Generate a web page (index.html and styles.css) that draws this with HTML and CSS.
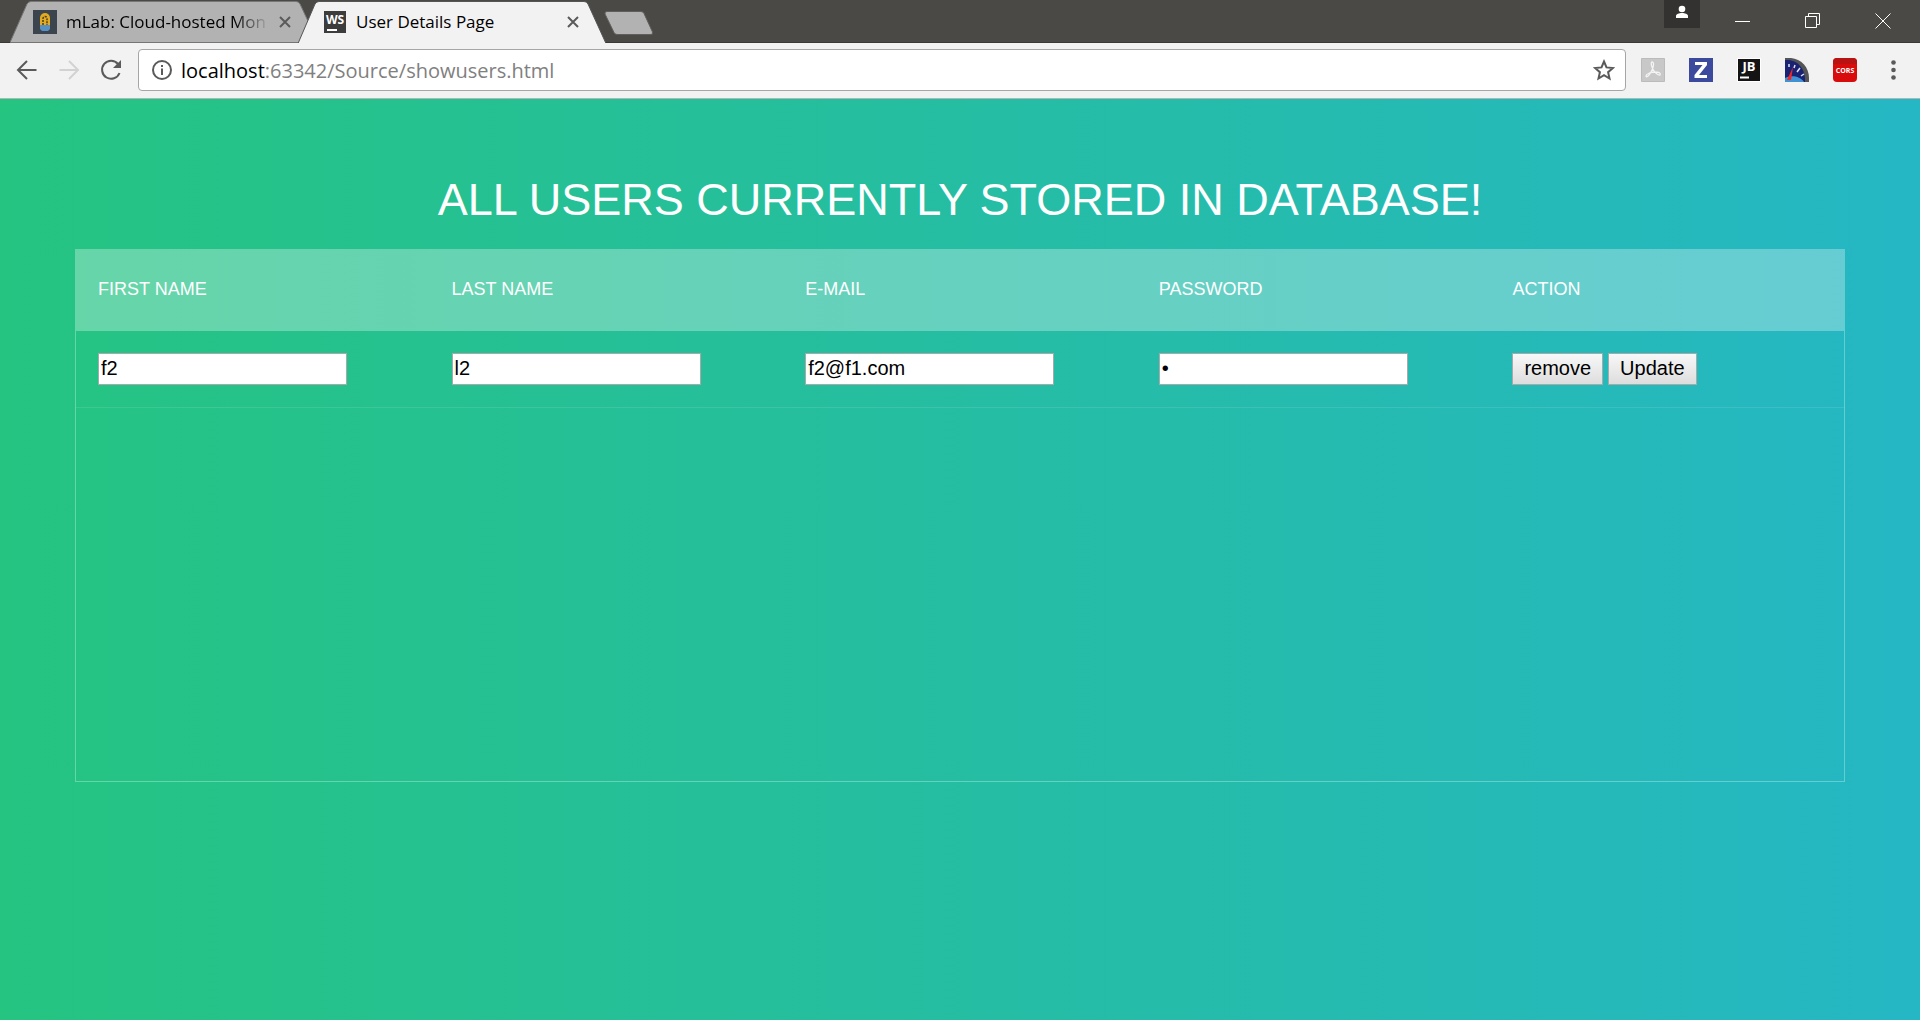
FILE: index.html
```html
<!DOCTYPE html>
<html lang="en">
<head>
<meta charset="utf-8">
<title>User Details Page</title>
<link rel="stylesheet" href="styles.css">
</head>
<body>
<header class="browser">
  <div class="tabstrip">
    <div class="tab">
      <svg class="tab-shape" viewBox="0 0 309 43" aria-hidden="true"><path d="M0 42.500L17 4Q18.500 1.500 21 1.500H286Q289 1.500 290 4L308 42.500" fill="#b2b2b2" stroke="#777" /></svg>
      <svg class="favicon" viewBox="0 0 24 24" aria-hidden="true"><rect width="24" height="24" fill="#3c444d"/><path d="M7 16V8a5 5 0 0 1 10 0v8z" fill="#e3ac20"/><path d="M10 15V8.500a2 2 0 0 1 4 0V15" fill="none" stroke="#4a3d20" stroke-width="1.500" stroke-dasharray="2 1"/><path d="M7 15h10v4l-2 2H9l-2-2z" fill="#5790c4"/></svg>
      <span class="tab-title fading">mLab: Cloud-hosted Mon</span>
      <button class="tab-close" aria-label="Close tab"><svg width="12" height="12" viewBox="0 0 12 12"><path d="M1 1l10 10M11 1L1 11"/></svg></button>
    </div>
    <div class="tab active">
      <svg class="tab-shape" viewBox="0 0 309 43" aria-hidden="true"><path d="M0 43.500L17 4Q18.500 1.500 21 1.500H286Q289 1.500 290 4L308 43.500" fill="#f2f2f2" stroke="#555"/></svg>
      <svg class="favicon" viewBox="0 0 24 24" aria-hidden="true"><rect x="1" y="1" width="22" height="22" fill="#3c3c3c"/><text x="12" y="14" class="logo-text" font-size="12" text-anchor="middle">WS</text><path d="M4 19h10v2H4z" fill="#fff"/></svg>
      <span class="tab-title">User Details Page</span>
      <button class="tab-close" aria-label="Close tab"><svg width="12" height="12" viewBox="0 0 12 12"><path d="M1 1l10 10M11 1L1 11"/></svg></button>
    </div>
    <button class="new-tab" aria-label="New tab"><svg width="50" height="24" viewBox="0 0 50 24"><path d="M3 .5H37Q39 .5 40 2.500L48.500 21Q49 23.500 47 23.500H13Q11 23.500 10 21.500L1 3Q.5 .5 3 .5z" fill="#b2b2b2" stroke="#5f5e5b"/></svg></button>
    <div class="window-controls">
      <button class="profile" aria-label="Profile"><svg width="14" height="14" viewBox="0 0 14 14"><circle cx="7" cy="4" r="3.300" fill="#fff"/><path d="M1 13v-2c0-2 3-3 6-3s6 1 6 3v2z" fill="#fff"/></svg></button>
      <button class="window-button" aria-label="Minimize"><svg width="16" height="16" viewBox="0 0 16 16"><path d="M0 8.500h15"/></svg></button>
      <button class="window-button" aria-label="Restore"><svg width="16" height="16" viewBox="0 0 16 16"><path d="M.5 3.500h11v11H.5zM3.500 3.500V.5h11v11h-3"/></svg></button>
      <button class="window-button" aria-label="Close"><svg width="16" height="16" viewBox="0 0 16 16"><path d="M.5 .5l15 15M15.500 .5l-15 15"/></svg></button>
    </div>
  </div>
  <div class="toolbar">
    <button class="nav-button" aria-label="Back"><svg width="22" height="22" viewBox="0 0 22 22"><path d="M20.500 11H2M11 2l-9 9 9 9"/></svg></button>
    <button class="nav-button" aria-label="Forward" disabled><svg width="22" height="22" viewBox="0 0 22 22"><path d="M1.500 11H20M11 2l9 9-9 9"/></svg></button>
    <button class="nav-button" aria-label="Reload"><svg width="22" height="22" viewBox="0 0 22 22"><path d="M18 5a9 9 0 1 0 1.500 9"/><path d="M21 1v8h-8z" fill="#5a5a5a" stroke="none"/></svg></button>
    <div class="omnibox">
      <svg width="22" height="22" viewBox="0 0 22 22" aria-hidden="true"><circle cx="11" cy="11" r="9" fill="none" stroke="#5a5a5a" stroke-width="2"/><path d="M10 6h2v2h-2zM10 9.500h2v6.500h-2z" fill="#5a5a5a"/></svg>
      <span class="url"><span class="host">localhost</span>:63342/Source/showusers.html</span>
      <button class="icon-button" aria-label="Bookmark"><svg width="22" height="22" viewBox="0 0 22 22"><path d="M11 2.500l2.500 5.900 6.400.6-4.800 4.200 1.400 6.300L11 16.200l-5.500 3.300 1.400-6.300L2.100 9l6.400-.6z" fill="none" stroke="#5a5a5a" stroke-width="2"/></svg></button>
    </div>
    <div class="extensions">
      <button class="icon-button" aria-label="Acrobat"><svg width="24" height="24" viewBox="0 0 24 24"><path d="M.5 .5h23v23H.5z" fill="#c8c8c8" stroke="#bbb"/><path d="M11 4c3 0 1 7-1 10-2 4-5 6-5 4s5-4 9-4 6 1 5 3c-2 1-7-4-8-8-1-3-1-5 0-5z" fill="none" stroke="#f4f4f4" stroke-width="1.300"/></svg></button>
      <button class="icon-button" aria-label="Zotero"><svg width="24" height="24" viewBox="0 0 24 24"><rect width="24" height="24" fill="#3c4a9e"/><path d="M6 4h12v3l-8 10h8v3H5.500v-3L13.500 7H6z" fill="#fff"/></svg></button>
      <button class="icon-button" aria-label="JetBrains"><svg width="24" height="24" viewBox="0 0 24 24"><rect width="24" height="24" fill="#fff"/><rect x="1" y="1" width="22" height="22" fill="#141414"/><text x="12" y="13" class="logo-text" font-size="13" text-anchor="middle">JB</text><path d="M3 18.500h9v2H3z" fill="#fff"/></svg></button>
      <button class="icon-button" aria-label="Page load time"><svg width="24" height="24" viewBox="0 0 24 24"><path d="M0 0h6c10 1 18 9 18 20v4H0z" fill="#555"/><path d="M0 2h4c9 1 15 8 16 18v4H0z" fill="#1a2373"/><path d="M0 20c6-3 15-2 19 4H0z" fill="#3f93d5"/><path d="M4 6v3M10 7l-1 3M15 10l-3 4M19 16l-3 2" stroke="#dce2f5" stroke-width="1.500"/><path d="M8 9L2 22h4z" fill="#f02828"/></svg></button>
      <button class="icon-button" aria-label="CORS"><svg width="24" height="24" viewBox="0 0 24 24"><rect width="24" height="24" rx="4" fill="#d90c0c"/><path d="M4 0h16q4 0 4 4v2H0V4q0-4 4-4z" fill="#b91212"/><text x="12" y="15" class="cors-text" text-anchor="middle">CORS</text></svg></button>
      <button class="icon-button" aria-label="Menu"><svg width="24" height="24" viewBox="0 0 24 24" fill="#5a5a5a"><circle cx="12.500" cy="4.500" r="2.300"/><circle cx="12.500" cy="12" r="2.300"/><circle cx="12.500" cy="19.500" r="2.300"/></svg></button>
    </div>
  </div>
</header>
<main class="page">
  <h1>All users currently stored in database!</h1>
  <div class="panel">
    <table class="users">
      <thead>
        <tr><th id="first">First Name</th><th id="last">Last Name</th><th id="email">E-mail</th><th id="password">Password</th><th>Action</th></tr>
      </thead>
      <tbody>
        <tr>
          <td><input class="field" type="text" value="f2" aria-labelledby="first"></td>
          <td><input class="field" type="text" value="l2" aria-labelledby="last"></td>
          <td><input class="field" type="text" value="f2@f1.com" aria-labelledby="email"></td>
          <td><input class="field" type="password" value="1" aria-labelledby="password"></td>
          <td><div class="actions"><button class="action">remove</button><button class="action">Update</button></div></td>
        </tr>
      </tbody>
    </table>
  </div>
</main>
</body>
</html>
```

FILE: styles.css
```css
* {
  box-sizing: border-box;
}

body {
  display: flex;
  flex-direction: column;
  min-height: 100vh;
  margin: 0;
  font-family: "Liberation Sans", Arial, sans-serif;
}

button {
  padding: 0;
  border: 0;
  background: none;
}

svg {
  display: block;
}

/* Browser window */
.browser {
  font-family: "Open Sans", "Noto Sans", sans-serif;
}

.tabstrip {
  display: flex;
  height: 43px;
  padding-left: 10px;
  background: #4b4946;
  border-bottom: 1px solid #3b3937;
}

.tab {
  position: relative;
  z-index: 0;
  display: flex;
  align-items: center;
  gap: 9px;
  width: 309px;
  height: 43px;
  padding: 0 28px 0 23px;
}

.tab.active {
  z-index: 1;
  margin-left: -21px;
  padding-left: 25px;
}

.tab-shape {
  position: absolute;
  inset: 0;
  z-index: -1;
  width: 100%;
  height: 43px;
}

.favicon {
  flex: none;
  width: 24px;
  height: 24px;
}

.tab-title {
  flex: 1;
  overflow: hidden;
  font-size: 17px;
  line-height: 24px;
  white-space: nowrap;
}

.fading {
  mask-image: linear-gradient(to right, #000 82%, transparent);
}

.tab-close {
  stroke: #5a5a5a;
  stroke-width: 2;
}

.new-tab {
  align-self: flex-start;
  margin-top: 11px;
  margin-left: -3px;
}

.window-controls {
  display: flex;
  margin-right: 2px;
  margin-left: auto;
}

.profile {
  display: flex;
  justify-content: center;
  width: 36px;
  height: 28px;
  padding-top: 5px;
  background: #333230;
}

.window-button {
  display: grid;
  place-items: center;
  width: 70px;
  height: 41px;
  fill: none;
  stroke: #fff;
}

.window-button:nth-child(2) {
  margin-left: 8px;
}

.toolbar {
  display: flex;
  align-items: center;
  height: 56px;
  padding: 0 15px 1px 16px;
  background: #f2f2f2;
  border-bottom: 1px solid #b4b4b4;
}

.nav-button {
  width: 42px;
  fill: none;
  stroke: #5a5a5a;
  stroke-width: 2;
}

.nav-button:disabled {
  stroke: #d2d2d2;
}

.nav-button:nth-child(3) {
  width: 38px;
}

.omnibox {
  display: flex;
  flex: 1;
  align-items: center;
  gap: 8px;
  height: 42px;
  padding: 0 10px 0 12px;
  background: #fff;
  border: 1px solid #a6a6a6;
  border-radius: 4px;
}

.url {
  flex: 1;
  padding-top: 2px;
  color: #808080;
  font-size: 20px;
  line-height: 28px;
}

.host {
  color: #000;
}

.extensions {
  display: flex;
  gap: 24px;
  margin-left: 15px;
}

.logo-text {
  fill: #fff;
  font-family: "Open Sans", sans-serif;
  font-weight: 700;
}

.cors-text {
  fill: #fff;
  font-family: "Liberation Sans Narrow", "Open Sans", sans-serif;
  font-size: 7px;
  font-weight: 700;
}

/* Users page */
.page {
  flex: 1;
  padding: 75px;
  background: linear-gradient(to right, #25c481, #25b7c4);
}

h1 {
  margin: 0 0 23px;
  color: #fff;
  font-size: 45px;
  font-weight: 400;
  line-height: 52px;
  text-align: center;
  text-transform: uppercase;
}

.panel {
  min-height: 533px;
  border: 1px solid rgba(255, 255, 255, 0.3);
}

.users {
  width: 100%;
  table-layout: fixed;
  border-collapse: separate;
  border-spacing: 0;
}

.users thead {
  background: rgba(255, 255, 255, 0.3);
}

.users th {
  padding: 29px 22px 31px;
  color: #fff;
  font-size: 18px;
  font-weight: 400;
  line-height: 21px;
  text-align: left;
  text-transform: uppercase;
}

.users td {
  padding: 22px;
  border-bottom: 1px solid rgba(255, 255, 255, 0.1);
}

.field,
.action {
  display: block;
  height: 32px;
  border: 1px solid #a9a9a9;
  color: #000;
  font-family: inherit;
  font-size: 20px;
}

.field {
  width: 249px;
  max-width: 100%;
  padding: 0 2px 2px;
  background: #fff;
}

.actions {
  display: flex;
  gap: 5px;
}

.action {
  padding: 0 11px 2px;
  background: linear-gradient(#f8f8f8, #dddddd);
}
```
